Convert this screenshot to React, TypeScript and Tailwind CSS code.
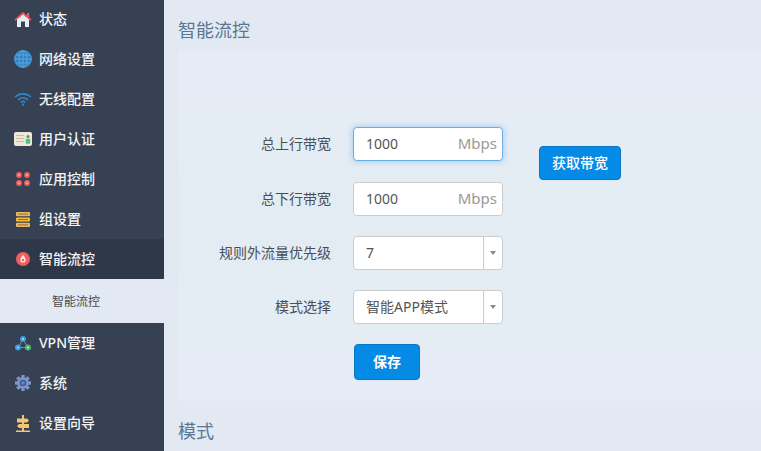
const cjk = "font-['Noto_Sans','Noto_Sans_CJK_SC',sans-serif]"

function HomeIcon() {
  return (
    <svg width="18" height="17" viewBox="0 0 18 17">
      <path d="M3 8 L9 3 L15 8 V16 H11 V10.500 H7 V16 H3 Z" fill="#e8edf3" />
      <path d="M0.500 8.500 L9 1 L17.500 8.500 L16.500 9.800 L9 3.500 L1.500 9.800 Z" fill="#ef5a5e" />
      <rect x="13" y="2" width="2.200" height="4" fill="#ef5a5e" />
    </svg>
  )
}

function GlobeIcon() {
  return (
    <svg width="18" height="18" viewBox="0 0 18 18" fill="none" stroke="#3f94d6">
      <circle cx="9" cy="9" r="8.300" fill="#2f7fbd" stroke="#459bdc" strokeWidth="1.300" />
      <ellipse cx="9" cy="9" rx="4" ry="8.300" strokeWidth="1.100" stroke="#5aa6df" />
      <path d="M9 1V17M1 9H17M2 5H16M2 13H16" strokeWidth="1" stroke="#5aa6df" />
    </svg>
  )
}

function WifiIcon() {
  return (
    <svg width="18" height="14" viewBox="0 0 18 14" fill="none" stroke="#2f86c5" strokeWidth="1.700">
      <path d="M1 5 C5.500 0.800 12.500 0.800 17 5" />
      <path d="M4 7.800 C7 5.200 11 5.200 14 7.800" />
      <path d="M6.700 10.300 C8 9.300 10 9.300 11.300 10.300" />
      <circle cx="9" cy="12.600" r="1.200" fill="#2f86c5" stroke="none" />
    </svg>
  )
}

function CardIcon() {
  return (
    <svg width="18" height="14" viewBox="0 0 18 14">
      <rect width="18" height="14" rx="2" fill="#efe8d6" />
      <path d="M2 3.500H10M2 6.500H10M2 9.500H10" stroke="#c9bda0" strokeWidth="1" />
      <circle cx="14" cy="4.500" r="1.500" fill="#3f9b63" />
      <rect x="11.800" y="6.800" width="4.400" height="5" rx="0.600" fill="#58bf7c" />
    </svg>
  )
}

function AppsIcon() {
  return (
    <svg width="14" height="14" viewBox="0 0 14 14">
      {[3, 11].map((y) =>
        [3, 11].map((x) => (
          <g key={`${x}-${y}`}>
            <circle cx={x} cy={y} r="2.900" fill="#ef5f5f" />
            <circle cx={x} cy={y} r="1.100" fill="#f6b08e" />
          </g>
        ))
      )}
    </svg>
  )
}

function GroupIcon() {
  return (
    <svg width="14" height="15" viewBox="0 0 14 15">
      <rect y="0" width="14" height="4.200" rx="1" fill="#f2b562" />
      <rect y="5.400" width="14" height="4.200" rx="1" fill="#f3c02f" />
      <rect y="10.800" width="14" height="4.200" rx="1" fill="#f2b562" />
      <path d="M2 2.100H12M2 7.500H12M2 12.900H12" stroke="#6d5a3c" strokeWidth="0.800" />
    </svg>
  )
}

function DropIcon() {
  return (
    <svg width="14" height="14" viewBox="0 0 14 14">
      <circle cx="7" cy="7" r="7" fill="#f15e5e" />
      <path d="M7 2.800 C8.300 4.800 9.700 6 9.700 7.900 A2.700 2.700 0 0 1 4.300 7.900 C4.300 6 5.700 4.800 7 2.800 Z" fill="#fbe3dc" />
      <circle cx="7" cy="8" r="1.200" fill="#f15e5e" />
    </svg>
  )
}

function VpnIcon() {
  return (
    <svg width="16" height="15" viewBox="0 0 16 15">
      <path d="M8 3.500 L3 11.500 H13 Z" fill="none" stroke="#7d8b8c" strokeWidth="1" />
      <circle cx="8" cy="3" r="3" fill="#3b9ae0" />
      <circle cx="8" cy="3" r="1" fill="#bfe0f5" />
      <circle cx="3" cy="11.500" r="3" fill="#3b9ae0" />
      <circle cx="3" cy="11.500" r="1" fill="#bfe0f5" />
      <circle cx="13" cy="11.500" r="3" fill="#4cb877" />
      <circle cx="13" cy="11.500" r="1" fill="#bdeacd" />
    </svg>
  )
}

function GearIcon() {
  return (
    <svg width="16" height="16" viewBox="0 0 16 16">
      <g fill="#7f95c9">
        {[0, 45, 90, 135].map((a) => (
          <rect key={a} x="6.300" y="0" width="3.400" height="16" rx="0.600" transform={`rotate(${a} 8 8)`} />
        ))}
      </g>
      <circle cx="8" cy="8" r="5.700" fill="#7f95c9" />
      <circle cx="8" cy="8" r="3.300" fill="#46598a" />
      <circle cx="8" cy="8" r="1.800" fill="#5a8cc6" />
    </svg>
  )
}

function WizardIcon() {
  return (
    <svg width="14" height="17" viewBox="0 0 14 17" fill="#f6c477">
      <rect x="6" y="0" width="2" height="17" />
      <path d="M1 3.500H11L13 5.500L11 7.500H1Z" />
      <path d="M13 9H3L1 11L3 13H13Z" />
      <rect x="0" y="15.500" width="14" height="1.500" />
    </svg>
  )
}

function NavItem({ icon, label, active }: { icon: React.ReactNode; label: string; active?: boolean }) {
  return (
    <div className={`flex items-center h-10 ${active ? 'bg-[#2f3849]' : ''}`}>
      <div className="w-[46px] flex justify-center shrink-0">{icon}</div>
      <span className="-ml-[7px] text-sm text-[#f2f4f6] font-medium">{label}</span>
    </div>
  )
}

function Row({ label, children, className }: { label: string; children: React.ReactNode; className?: string }) {
  return (
    <div className={`flex items-center h-[34px] ${className}`}>
      <label className="w-[153px] text-right text-sm text-[#4a4f57]">{label}</label>
      <div className="ml-[22px] w-[150px]">{children}</div>
    </div>
  )
}

function UnitInput({ focused }: { focused?: boolean }) {
  return (
    <div
      className={`flex items-center justify-between h-[34px] bg-white rounded pl-3 pr-[5px] border ${
        focused ? 'border-[#66afe9] shadow-[0_0_6px_rgba(102,175,233,0.6)]' : 'border-[#cccccc]'
      }`}
    >
      <span className="text-sm text-[#555555]">1000</span>
      <span className="text-[15px] text-[#999999] -mt-[2px]">Mbps</span>
    </div>
  )
}

function Select({ value }: { value: string }) {
  return (
    <div className="flex items-center h-[34px] bg-white rounded border border-[#cccccc]">
      <span className="flex-1 pl-3 text-sm text-[#555555]">{value}</span>
      <div className="w-[19px] h-full border-l border-[#cccccc] flex items-center justify-center">
        <span className="w-0 h-0 border-x-[3px] border-x-transparent border-t-[4px] border-t-[#888888]" />
      </div>
    </div>
  )
}

export default function App() {
  return (
    <div className={`${cjk} flex w-[761px] h-[451px] overflow-hidden bg-[#e3e9f3]`}>
      <aside className="w-[164px] shrink-0 bg-[#364153] -mt-px">
        <NavItem icon={<HomeIcon />} label="状态" />
        <NavItem icon={<GlobeIcon />} label="网络设置" />
        <NavItem icon={<WifiIcon />} label="无线配置" />
        <NavItem icon={<CardIcon />} label="用户认证" />
        <NavItem icon={<AppsIcon />} label="应用控制" />
        <NavItem icon={<GroupIcon />} label="组设置" />
        <NavItem icon={<DropIcon />} label="智能流控" active />
        <div className="h-[44px] pt-px bg-[#e3e9f3] flex items-center pl-[52px] text-xs text-[#444a52]">智能流控</div>
        <NavItem icon={<VpnIcon />} label="VPN管理" />
        <NavItem icon={<GearIcon />} label="系统" />
        <NavItem icon={<WizardIcon />} label="设置向导" />
      </aside>
      <main className="flex-1 min-w-0 pl-[14px]">
        <h1 className="h-[50px] pt-[17px] text-lg leading-[26px] text-[#5a7791] font-normal">智能流控</h1>
        <section className="h-[351px] bg-gradient-to-b from-[#e6ecf6] via-[#e3ecf2] to-[#e6ecf6] pt-[77px]">
          <div className="flex">
            <div>
              <Row label="总上行带宽" className="mb-[21px]">
                <UnitInput focused />
              </Row>
              <Row label="总下行带宽" className="mb-[20px]">
                <UnitInput />
              </Row>
              <Row label="规则外流量优先级" className="mb-[20px]">
                <Select value="7" />
              </Row>
              <Row label="模式选择" className="mb-[20px]">
                <Select value="智能APP模式" />
              </Row>
              <button className="ml-[176px] w-[66px] h-[36px] rounded bg-[#058ae6] border border-[#0779c8] text-sm font-bold text-white">
                保存
              </button>
            </div>
            <button className="ml-[36px] mt-[19px] w-[82px] h-[34px] rounded bg-[#058ae6] border border-[#0779c8] text-sm font-medium text-white">
              获取带宽
            </button>
          </div>
        </section>
        <h2 className="pt-[17px] text-lg leading-[26px] text-[#5a7791] font-normal">模式</h2>
      </main>
    </div>
  )
}
